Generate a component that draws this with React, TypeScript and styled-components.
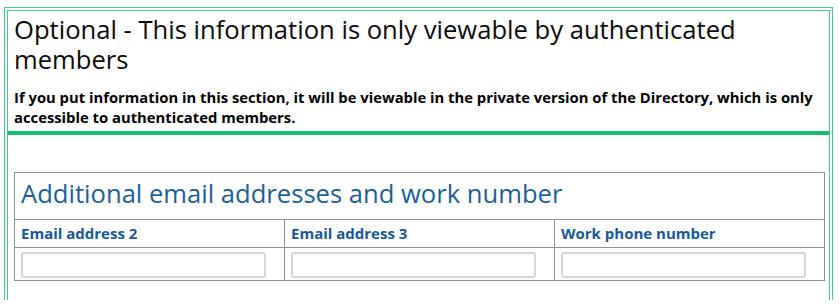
import React from "react";
import styled, { createGlobalStyle } from "styled-components";

const Global = createGlobalStyle`
  html, body { margin: 0; padding: 0; background: #ffffff; }
  body { font-family: "Open Sans", "Noto Sans", sans-serif; color: #000; }
`;

const Page = styled.div`
  padding: 7px 0 0 4px;
  width: 829px;
`;

const OuterFrame = styled.div`
  border: 1px solid #3ccf8c;
  border-bottom: none;
  padding: 2px 2px 0 2px;
`;

const InnerFrame = styled.div`
  border: 1px solid #3ccf8c;
  border-bottom: none;
  padding-bottom: 19px;
`;

const Header = styled.div`
  border-bottom: 4px solid #12bf6f;
  padding: 4px 4px 4px 6px;
`;

const Heading = styled.h2`
  margin: 0;
  font-size: 25.6px;
  font-weight: 400;
  line-height: 30px;
  color: #0b0b0b;
`;

const Intro = styled.p`
  margin: 12px 0 0 0;
  font-size: 14.8px;
  font-weight: 700;
  line-height: 20px;
  color: #000;
`;

const Table = styled.table`
  margin: 37px 5px 0 6px;
  width: 811px;
  border-collapse: collapse;
  table-layout: fixed;
  border: 1px solid #8e8e8e;
`;

const TitleCell = styled.th`
  text-align: left;
  font-size: 25.6px;
  font-weight: 400;
  color: #1a5f9c;
  padding: 6px 6px 10px 6px;
  line-height: 30px;
  border: 1px solid #8e8e8e;
`;

const LabelCell = styled.th`
  text-align: left;
  font-size: 15px;
  font-weight: 700;
  color: #15599a;
  padding: 4px 6px 4px 6px;
  line-height: 19px;
  border: 1px solid #8e8e8e;
`;

const InputCell = styled.td`
  padding: 4px 6px 2px 6px;
  border: 1px solid #8e8e8e;
`;

const TextInput = styled.input`
  display: block;
  box-sizing: border-box;
  width: 245px;
  height: 26px;
  border: 2px solid #d6d6d6;
  border-radius: 3px;
  background: #fff;
  padding: 2px 4px;
  font-family: inherit;
  font-size: 13px;
`;

const columns = ["Email address 2", "Email address 3", "Work phone number"];

export default function App() {
  return (
    <>
      <Global />
      <Page>
        <OuterFrame>
          <InnerFrame>
            <Header>
              <Heading>Optional - This information is only viewable by authenticated members</Heading>
              <Intro>
                If you put information in this section, it will be viewable in the private version of the
                Directory, which is only accessible to authenticated members.
              </Intro>
            </Header>
            <Table>
              <thead>
                <tr>
                  <TitleCell colSpan={3}>Additional email addresses and work number</TitleCell>
                </tr>
              </thead>
              <tbody>
                <tr>
                  {columns.map((c) => (
                    <LabelCell key={c}>{c}</LabelCell>
                  ))}
                </tr>
                <tr>
                  {columns.map((c) => (
                    <InputCell key={c}>
                      <TextInput type="text" aria-label={c} />
                    </InputCell>
                  ))}
                </tr>
              </tbody>
            </Table>
          </InnerFrame>
        </OuterFrame>
      </Page>
    </>
  );
}
